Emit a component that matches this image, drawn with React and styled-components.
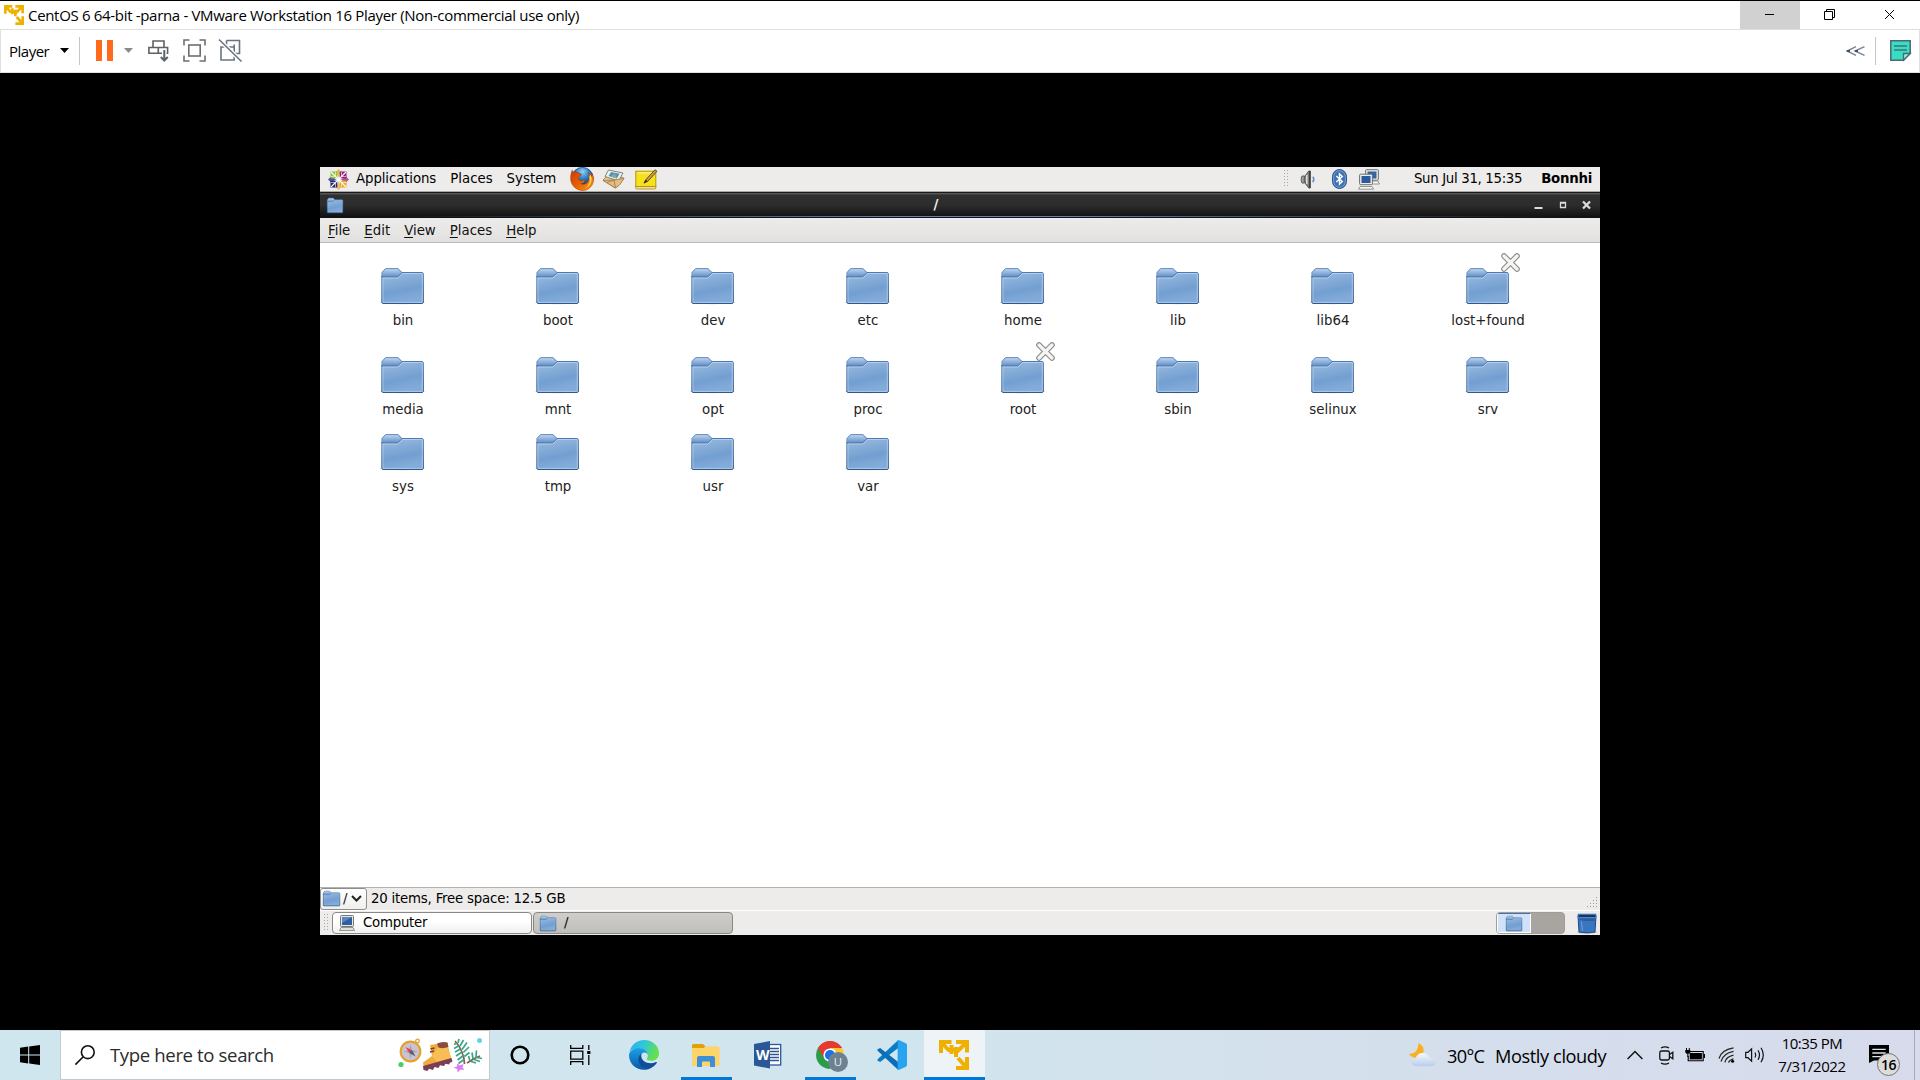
import React from "react";
import styled, { createGlobalStyle, css } from "styled-components";

const GlobalStyle = createGlobalStyle`
  * { box-sizing: border-box; }
  body { margin: 0; background: #000; overflow: hidden; }
  svg { display: block; flex: none; overflow: visible; }
`;

const WIN_FONT = `"Open Sans", "Noto Sans", sans-serif`;
const GTK_FONT = `"DejaVu Sans", sans-serif`;

/* ---------- shell ---------- */

const Screen = styled.div`
  width: 1920px;
  height: 1080px;
  display: flex;
  flex-direction: column;
  background: #000;
  font-family: ${WIN_FONT};
  color: #000;
`;

const Text = styled.span`
  display: block;
  white-space: pre;
  width: ${(p) => (p.$w ? `${p.$w}px` : "auto")};
  font-size: ${(p) => p.$size || 15}px;
  line-height: 20px;
  letter-spacing: ${(p) => p.$track || 0}px;
  margin-left: ${(p) => p.$left || 0}px;
`;

const Spacer = styled.div`
  flex: 1;
`;

/* ---------- player window ---------- */

const TitleBar = styled.header`
  height: 29px;
  flex: none;
  display: flex;
  align-items: center;
  padding-left: 4px;
  border-top: 1px solid #000;
  background: #fff;
`;

const CaptionButton = styled.div`
  width: 60px;
  height: 28px;
  display: flex;
  align-items: center;
  justify-content: center;
  padding: 0 2px 2px 0;
  background: ${(p) => (p.$hot ? "#d1d1d1" : "transparent")};
`;

const Toolbar = styled.div`
  height: 44px;
  flex: none;
  display: flex;
  align-items: center;
  padding: 0 8px 1px 8px;
  border: 1px solid #dfdfdf;
  background: #fff;
`;

const ToolIcon = styled.div`
  width: ${(p) => p.$w}px;
  margin-left: ${(p) => p.$left || 0}px;
`;

const Divider = styled.div`
  width: 1px;
  height: 28px;
  background: #c6c6c6;
  margin-left: ${(p) => p.$left}px;
`;

const Stage = styled.main`
  flex: 1;
  display: flex;
  justify-content: center;
  padding-top: 94px;
  background: #000;
`;

/* ---------- guest desktop ---------- */

const Guest = styled.section`
  width: 1280px;
  height: 768px;
  display: flex;
  flex-direction: column;
  background: #fff;
  font-family: ${GTK_FONT};
  font-size: 13.33px;
  line-height: 16px;
  color: #111;
`;

const TopPanel = styled.div`
  height: 25px;
  flex: none;
  display: flex;
  align-items: center;
  padding: 0 8px;
  background: #edeceb;
  border-bottom: 1px solid #a9a8a6;
`;

const PanelItem = styled.span`
  white-space: pre;
  margin-left: ${(p) => p.$left || 0}px;
  font-weight: ${(p) => (p.$bold ? 700 : 400)};
  letter-spacing: ${(p) => p.$track || 0}px;
  color: #000;
`;

const PanelIcon = styled.div`
  margin-left: ${(p) => p.$left || 0}px;
`;

const WindowTitle = styled.div`
  height: 26px;
  flex: none;
  display: flex;
  align-items: center;
  padding: 0 9px 1px 7px;
  border-top: 1px solid #1a1a1a;
  background:
    linear-gradient(90deg, #111 5%, #5c83b4 45%, #5c83b4 58%, #111 97%) 0 23px / 100% 1px no-repeat,
    linear-gradient(#555 0, #555 1px, #2f2f2f 2px, #2d2d2d 12px, #161616 22px, #111 100%);
  color: #fff;
`;

const TitleText = styled.span`
  flex: 1;
  text-align: center;
  font-weight: 700;
  color: #f4f4f4;
  padding-right: 4px;
`;

const MenuBar = styled.nav`
  height: 25px;
  flex: none;
  display: flex;
  align-items: center;
  padding: 2px 8px 0;
  gap: 14px;
  border-bottom: 1px solid #bdbbb8;
  background: linear-gradient(#edeceb, #e2e1df);
`;

const MenuItem = styled.span`
  white-space: pre;
  u { text-underline-offset: 2px; }
`;

const FileView = styled.div`
  height: 644px;
  flex: none;
  display: grid;
  grid-template-columns: repeat(8, 155px);
  grid-template-rows: 89px 77px 77px;
  padding: 25px 0 0 5px;
  background: #fff;
`;

const FileCell = styled.div`
  display: flex;
  flex-direction: column;
  align-items: center;
  gap: 9px;
`;

const IconBox = styled.div`
  position: relative;
  width: 42px;
  height: 36px;
  margin-right: 1px;
`;

const Emblem = styled.div`
  position: absolute;
  left: 35px;
  top: -15px;
`;

const FileName = styled.span`
  color: #222;
  white-space: pre;
  padding-left: 1px;
`;

const StatusBar = styled.div`
  height: 23px;
  flex: none;
  display: flex;
  align-items: center;
  border-top: 1px solid #b5b3b0;
  background: #edeceb;
`;

const PathButton = styled.div`
  width: 47px;
  height: 22px;
  display: flex;
  align-items: center;
  padding: 0 0 1px 2px;
  gap: 3px;
  border: 1px solid #8e8c88;
  border-radius: 3px;
  background: linear-gradient(#fff, #efefee);
`;

const StatusText = styled.span`
  margin-left: 4px;
  letter-spacing: -0.21px;
  color: #000;
`;

const GripHolder = styled.div`
  align-self: flex-end;
  padding: 0 2px 2px 0;
`;

const BottomPanel = styled.div`
  height: 25px;
  flex: none;
  display: flex;
  align-items: center;
  padding: 0 3px 0 4px;
  border-top: 1px solid #fff;
  background: #edeceb;
`;

const TaskButton = styled.div`
  width: 200px;
  height: 22px;
  display: flex;
  align-items: center;
  gap: 8px;
  padding-left: 6px;
  margin-left: ${(p) => p.$left || 0}px;
  border: 1px solid #8a8885;
  border-radius: 4px;
  color: #000;
  ${(p) =>
    p.$active
      ? css`background: linear-gradient(#d0cecb, #c0beba);`
      : css`background: linear-gradient(#fff 40%, #f0f0ef);`}
`;

const TaskLabel = styled.span`
  letter-spacing: -0.25px;
  padding-bottom: ${(p) => p.$lift || 0}px;
`;

const Pager = styled.div`
  width: 69px;
  height: 22px;
  display: flex;
  border-radius: 4px;
  overflow: hidden;
  border: 1px solid #a09e9b;
  background: #a8a4a0;
  margin-right: 12px;
`;

const PagerCell = styled.div`
  width: 34px;
  display: flex;
  align-items: center;
  justify-content: center;
  background: #d1e2f8;
  border: 1px solid #fff;
  border-top-color: #4b6ea5;
`;

/* ---------- taskbar ---------- */

const Taskbar = styled.footer`
  height: 50px;
  flex: none;
  display: flex;
  background: linear-gradient(90deg, #cfe6ef 0, #d1e5ee 48%, #d4dfec 72%, #d7dbec 100%);
`;

const Slot = styled.div`
  width: ${(p) => p.$w || 62}px;
  height: 50px;
  display: flex;
  align-items: center;
  justify-content: center;
`;

const AppSlot = styled(Slot)`
  background-repeat: no-repeat;
  ${(p) =>
    p.$open &&
    css`
      background-image: linear-gradient(#0078d7, #0078d7)
        ${p.$active ? ", linear-gradient(#edf3f7, #edf3f7)" : ""};
      background-position: ${p.$active ? "1px 47px, 1px 0" : "6px 47px"};
      background-size: ${p.$active ? "61px 3px, 61px 50px" : "51px 3px"};
    `}
`;

const SearchBox = styled.div`
  width: 430px;
  height: 50px;
  display: flex;
  align-items: center;
  padding: 0 6px 0 14px;
  border: 1px solid #c6c9cb;
  background: #fff;
  color: #2b2b2b;
`;

const TrayItem = styled.div`
  height: 50px;
  display: flex;
  align-items: center;
  margin-left: ${(p) => p.$left || 0}px;
  padding-top: ${(p) => p.$drop || 0}px;
`;

const Clock = styled.div`
  width: 80px;
  margin-left: 6px;
  padding-top: 3px;
  display: flex;
  flex-direction: column;
  align-items: center;
  gap: 3px;
`;

const Notifications = styled.div`
  position: relative;
  width: 20px;
  height: 50px;
  padding-top: 15px;
  margin-left: 17px;
`;

const Badge = styled.span`
  position: absolute;
  left: 8px;
  top: 23px;
  width: 23px;
  height: 23px;
  border-radius: 50%;
  border: 1px solid #777;
  background: #dcdcdc;
  font-size: 14px;
  font-weight: 600;
  line-height: 21px;
  letter-spacing: -0.6px;
  text-align: center;
`;

const ShowDesktop = styled.div`
  width: 6px;
  margin-left: 25px;
  border-left: 1px solid #a3adb8;
`;

/* ---------- drawings ---------- */

const VmwareMark = ({ size, color = "#f0b000" }) => (
  <svg width={size} height={size} viewBox="0 0 30 30" fill="none" stroke={color} strokeWidth="4">
    <path d="M2 13V2H12.5M2.5 2.5L10 10.5M9 10H15M12.5 5L12.5 14" />
    <path d="M17 2H28V12.5M27 3L16.5 13M17 7V17" />
    <path d="M28 17V28H17M27 27L19 18" />
  </svg>
);

const Folder = ({ w = 43, h = 36 }) => (
  <svg width={w} height={h} viewBox="0 0 43 36" preserveAspectRatio="none">
    <defs>
      <linearGradient id="fBody" x1="0" y1="0" x2="0.25" y2="1">
        <stop offset="0" stopColor="#a5c1e2" />
        <stop offset="0.7" stopColor="#729fd1" />
        <stop offset="1" stopColor="#83abd9" />
      </linearGradient>
      <linearGradient id="fTab" x1="0" y1="0" x2="0" y2="1">
        <stop offset="0" stopColor="#b9d0ec" />
        <stop offset="1" stopColor="#5f8dc4" />
      </linearGradient>
      <linearGradient id="fLine" x1="0" y1="0" x2="0" y2="1">
        <stop offset="0" stopColor="#4f80bd" />
        <stop offset="1" stopColor="#204a87" />
      </linearGradient>
    </defs>
    <ellipse cx="21.5" cy="34.6" rx="22.5" ry="1.6" fill="#000" opacity="0.18" />
    <path d="M1 9V4.5L4.5 .7H17L21 4.5H41Q42.3 4.5 42.3 6V34Q42.3 35.4 41 35.4H2Q.9 35.4 .9 34V8Z" fill="url(#fBody)" stroke="url(#fLine)" strokeWidth={w < 30 ? 2.2 : 1} />
    <path d="M1.6 9V4.8L4.8 1.3H16.8L20.3 5L16.5 9Z" fill="url(#fTab)" />
    <path d="M1.5 9H16.5L20.8 5" fill="none" stroke="#4677b3" strokeWidth={w < 30 ? 1.8 : 1} />
    <path d="M1.9 34.4V10H17L21.5 5.5H41.3V34.4Z" fill="none" stroke="#c8dcf2" strokeWidth=".9" opacity=".75" />
  </svg>
);

const LockedEmblem = () => (
  <svg width="19" height="19" viewBox="0 0 19 19">
    <path d="M3 3L16 16M16 3L3 16" stroke="#888a85" strokeWidth="5.6" strokeLinecap="round" />
    <path d="M3 3L16 16M16 3L3 16" stroke="#f4f4f3" strokeWidth="3.4" strokeLinecap="round" />
  </svg>
);

const CentosMark = () => (
  <svg width="21" height="21" viewBox="0 0 21 21">
    {[0, 90, 180, 270].map((a, i) => (
      <g key={a} transform={`rotate(${a} 10.5 10.5)`}>
        <path d="M10.5 0L13.5 3L10.5 8L7.5 3Z" fill={["#efa724", "#932279", "#e8b04a", "#262577"][i]} opacity=".75" />
        <path d="M11.7 2.5H18.5V9.3H11.7Z" fill={["#932279", "#efa724", "#262577", "#8cc63a"][i]} />
        <path d="M10.5 10.5L18 3" stroke="#fff" strokeWidth="1.1" fill="none" />
        <path d="M13.5 3V7.5H18" stroke="#fff" strokeWidth=".6" fill="none" />
      </g>
    ))}
  </svg>
);

const Firefox = () => (
  <svg width="24" height="24" viewBox="0 0 24 24">
    <defs>
      <radialGradient id="ffG" cx=".5" cy=".2" r=".7">
        <stop offset="0" stopColor="#8fd3f7" />
        <stop offset=".5" stopColor="#2c7ac3" />
        <stop offset="1" stopColor="#0b2a63" />
      </radialGradient>
      <linearGradient id="ffO" x1="0" y1="0" x2="1" y2="1">
        <stop offset="0" stopColor="#c93a09" />
        <stop offset=".5" stopColor="#e66000" />
        <stop offset=".85" stopColor="#f08a15" />
        <stop offset="1" stopColor="#b93208" />
      </linearGradient>
    </defs>
    <circle cx="12.5" cy="11" r="10.6" fill="url(#ffG)" stroke="#123a78" strokeWidth=".8" />
    <path d="M2.2 3.2C2.7 4.5 3.2 5 4.4 5.2C6 4.6 8 5 9 6.3L11.5 7.2C11 9 9.4 9.3 8.5 10.2C8 12 9 13 10 13.5C12 14.2 13.5 12.6 15 13C14.6 15.6 12.6 16.6 10.7 16.4C13 18.2 17 17 18.6 13.6C19.7 10.8 19 7.6 17.8 5.5C20 7 21 8.5 21.5 10L21.6 6C24.2 10 24.3 14.5 21.8 18.4C19 22.6 14.7 24.1 10.4 23.2C4.5 22 .6 17.2 .6 11.2C.6 8 1.4 5 2.2 3.2Z" fill="url(#ffO)" stroke="#a83208" strokeWidth=".5" />
    <path d="M21.5 10C22.4 15 19.5 20.3 14.5 21.4C19 19.5 20.4 14.6 19.3 9.8L20.6 7.8Z" fill="#ffd54a" />
  </svg>
);

const Mail = () => (
  <svg width="23" height="20" viewBox="0 0 23 20" strokeLinejoin="round">
    <path d="M1 11L7 5L22 9L17 16L13 19Z" fill="#e9c58e" stroke="#a07842" strokeWidth=".8" />
    <path d="M6.5 1L21 4L16.5 12L3 7.5Z" fill="#eef1ee" stroke="#7f8582" />
    <path d="M9 3L17.6 4.8L14.8 9.6L6.5 7Z" fill="#5b8fbd" />
    <path d="M9 7.6L12.8 4.4L14.6 9.4Z" fill="#8bb37c" />
    <path d="M1 11.5L12 11L22 9.5L17.5 16L13.5 19Z" fill="#e3bd85" stroke="#a07842" strokeWidth=".8" />
    <path d="M12 11L13.5 19M12 11L5 13.5" stroke="#a07842" strokeWidth=".8" />
  </svg>
);

const Notes = () => (
  <svg width="22" height="21" viewBox="0 0 22 21">
    <rect x=".8" y="16" width="20" height="4" rx="1" fill="#f3d9a5" stroke="#c9922e" />
    <rect x=".8" y="2.2" width="20" height="15.3" fill="#f5e11c" stroke="#b39a00" />
    <path d="M2.5 3.9H19" stroke="#fdf6a4" />
    <path d="M9 14L11 10.5L20 .8L22 2.3L12.8 12.3Z" fill="#c99a56" stroke="#5f4218" strokeWidth=".9" />
    <path d="M8.6 14.4L10.8 10.8L12.6 12.2Z" fill="#2d2415" />
  </svg>
);

const Dots = ({ rows }) => (
  <svg width="5" height={rows * 3} viewBox={`0 0 5 ${rows * 3}`} fill="#aaa8a5">
    {Array.from({ length: rows }, (_, r) => (
      <g key={r}>
        <rect x="0" y={r * 3} width="1" height="1" />
        <rect x="3" y={r * 3} width="1" height="1" />
      </g>
    ))}
  </svg>
);

const ResizeGrip = () => (
  <svg width="11" height="11" viewBox="0 0 11 11" fill="#999">
    {[[9, 0], [6, 3], [9, 3], [3, 6], [6, 6], [9, 6], [0, 9], [3, 9], [6, 9], [9, 9]].map(([x, y]) => (
      <rect key={`${x}-${y}`} x={x} y={y} width="1" height="1" />
    ))}
  </svg>
);

const GuestVolume = () => (
  <svg width="16" height="19" viewBox="0 0 16 19">
    <path d="M2 6H4.5Q3.4 9.5 4.5 13H2Q.2 9.5 2 6Z" fill="#a9aba7" stroke="#565855" />
    <path d="M5 6L8.8 1H10.3V18H8.8L5 13Q4 9.5 5 6Z" fill="#8d8f8b" stroke="#565855" />
    <path d="M6.8 5V14" stroke="#f0f0ee" strokeWidth="1.2" />
    <path d="M9.6 1V18" stroke="#3f403e" strokeWidth="1.6" />
    <path d="M12.8 6.8Q15 9.5 12.8 12.2" fill="none" stroke="#6b93c9" strokeWidth="1.5" />
  </svg>
);

const GuestBluetooth = () => (
  <svg width="15" height="20" viewBox="0 0 15 20">
    <rect x=".6" y=".6" width="13.8" height="18.8" rx="6.9" fill="#3e72b3" stroke="#1f4a86" />
    <rect x="1.7" y="1.7" width="11.6" height="16.6" rx="5.8" fill="none" stroke="#88afdd" strokeWidth=".8" />
    <path d="M4.3 7L10.3 12.6L7.5 15.2V4.8L10.3 7.4L4.3 13" fill="none" stroke="#fff" strokeWidth="1.4" />
  </svg>
);

const GuestNetwork = () => (
  <svg width="22" height="21" viewBox="0 0 22 21">
    <rect x="7.6" y=".7" width="12.8" height="10.5" rx="1" fill="#eceded" stroke="#6e706c" />
    <rect x="9.5" y="2.5" width="9" height="7" fill="#3263a4" />
    <path d="M14 12H20L21.4 15H14Z" fill="#f6f6f5" stroke="#888a85" strokeWidth=".9" />
    <rect x="1.6" y="5.2" width="12.8" height="10.5" rx="1" fill="#eceded" stroke="#6e706c" />
    <rect x="3.5" y="7" width="9" height="7" fill="#2c5a9c" />
    <path d="M2 17.5H14L15.6 20.2H.5Z" fill="#f6f6f5" stroke="#888a85" strokeWidth=".9" />
  </svg>
);

const GuestWindowButtons = () => (
  <svg width="58" height="10" viewBox="0 0 58 10">
    <rect x="1.5" y="7" width="8" height="2" fill="#dcdcdc" />
    <path d="M27.5 2.5H32.5V7.5H27.5ZM27 3H33" fill="none" stroke="#dcdcdc" strokeWidth="1.3" />
    <path d="M50 1.5L57 8.5M57 1.5L50 8.5" stroke="#dcdcdc" strokeWidth="2.3" />
  </svg>
);

const ComputerIcon = () => (
  <svg width="16" height="16" viewBox="0 0 16 16">
    <rect x="1.5" y=".5" width="13" height="11" rx="1" fill="#e8e8e6" stroke="#757773" />
    <rect x="3" y="2" width="10" height="8" fill="#2f5ea1" />
    <path d="M3 2H13L3 8Z" fill="#5b86c0" />
    <path d="M2 12.5H14L15.6 15.5H.4Z" fill="#dededc" stroke="#8b8d89" strokeWidth=".9" />
  </svg>
);

const Trash = () => (
  <svg width="20" height="21" viewBox="0 0 20 21">
    <ellipse cx="10" cy="19.3" rx="10" ry="1.5" opacity=".25" />
    <path d="M1 3L2 19Q10 20.6 18 19L19 3Z" fill="#3a76bf" stroke="#1c4a88" />
    <path d="M1 1.2H19V4.5H1Z" fill="#16355f" stroke="#4c84c6" />
    <path d="M1.5 5.5H18.5L17 8H8L3 7Z" fill="#2a5da0" />
    <path d="M4.5 8.5L5.4 18" stroke="#6da2de" />
  </svg>
);

const WindowsLogo = () => (
  <svg width="20" height="20" viewBox="0 0 20 20">
    <path d="M0 2.8L8.2 1.6V9.5H0ZM9.2 1.5L20 0V9.5H9.2ZM0 10.5H8.2V18.4L0 17.2ZM9.2 10.5H20V20L9.2 18.5Z" />
  </svg>
);

const SearchIcon = () => (
  <svg width="20" height="20" viewBox="0 0 20 20" fill="none" stroke="#111" strokeWidth="1.6">
    <circle cx="12.8" cy="7.2" r="6.4" />
    <path d="M8.2 11.8L.4 19.6" />
  </svg>
);

const SearchArt = () => (
  <svg width="85" height="35" viewBox="0 0 85 35">
    <circle cx="19.5" cy="3" r="1.8" fill="none" stroke="#e0a032" strokeWidth="1.3" />
    <circle cx="12.5" cy="13.5" r="9.8" fill="#c9c4d4" stroke="#e3a22f" strokeWidth="2.2" />
    <path d="M12.5 6L14 12L20 13.5L14 15L12.5 21L11 15L5 13.5L11 12Z" fill="#aaa5b6" />
    <path d="M7.5 9L14 12.3L11.2 14.8Z" fill="#ea3a4c" />
    <path d="M17.5 18.5L14 12.3L11.2 14.8Z" fill="#5b5568" />
    <circle cx="3" cy="26.5" r="2.6" fill="#46d068" />
    <path d="M32 7L49 4.5L53.5 22L26 31L25 24.5L34 18Z" fill="#f0ab3c" />
    <path d="M34 18L39 24L53 20L49.5 8L40 9Z" fill="#f8be55" />
    <path d="M39 5.5Q44 3 49.5 4.5L50.5 9Q45 11 40.5 9.5Z" fill="#8c4a41" />
    <path d="M25 28L53.5 20L54.5 23.5L52 24.7L51 26.5L47.5 25.8L46 28L42 27.2L40.5 30L36.5 29L35 32L31 30.8L29.5 33L25.5 32Z" fill="#7b3f55" />
    <path d="M32.5 11L36.5 10M32 14L36 13" stroke="#7b3f35" strokeWidth="1.4" />
    <path d="M57 3Q66 13 66.5 26M69 25Q76 20 82 18" fill="none" stroke="#8b5a44" strokeWidth="1.7" />
    <path d="M59 5L56 6.5M60.5 8L56 10.5M62.5 11L57 14M64 14L58 18M65.5 17.5L59.5 22M60 5L61 1M62 8L65.5 2M64 11.5L69 4.5M65.3 14.5L71 9M66.3 18.5L71.5 14.5M72 23L70.5 18M75 21L74 14.5M78 19.5L78.5 12.5M73 23.5L78 25M76 21.5L82 23.5M79 19.5L84 20.5M66 21.5L60.5 25.5" stroke="#3aa586" strokeWidth="1.7" />
    <circle cx="81.5" cy="2.6" r="2.5" fill="#5fd6e8" />
    <path d="M59 25.5L62 27.5L65.5 26L64.5 29.5L66.5 32L62.5 31.5L59.5 34.5L59.3 31L55.5 29.7L59 28.5Z" fill="#dd79f5" />
  </svg>
);

const TaskView = () => (
  <svg width="21" height="20" viewBox="0 0 21 20" fill="none" stroke="#000" strokeWidth="1.3">
    <path d="M.7 0V3.3H12.8V0M.7 20V16.7H12.8V20M.7 6.2H12.8V14.2H.7ZM18.8 0V5M18.8 10V20" />
    <path d="M17.2 7.5H20.4" strokeWidth="3" />
  </svg>
);

const Edge = () => (
  <svg width="30" height="30" viewBox="0 0 30 30">
    <defs>
      <linearGradient id="eA" x1="0" y1="0" x2="1" y2="0.4">
        <stop offset="0" stopColor="#2cadf0" />
        <stop offset=".5" stopColor="#2fc8d8" />
        <stop offset="1" stopColor="#66e04c" />
      </linearGradient>
      <linearGradient id="eB" x1="0" y1="0" x2="0" y2="1">
        <stop offset="0" stopColor="#1ba1ea" />
        <stop offset="1" stopColor="#0c59a4" />
      </linearGradient>
    </defs>
    <path d="M.4 13C1.5 5 8 0 15 0C24 0 30 6.5 30 13.2C30 18 26.5 20.8 22.3 20.8C19 20.8 17.5 19.7 17.7 18.8C18.2 18 18.8 17 18.8 15.4C18.8 12 15.5 8.3 9.8 8.3C5 8.3 1.5 10.5 .4 13Z" fill="url(#eA)" />
    <path d="M.2 13.5C2 9.8 5.6 7.9 10 7.9C15.3 7.9 18.8 11.6 18.8 15C18 12.6 15.8 12.2 14.2 12.8C11.5 14 10.2 17 10.5 20.5C11 25.5 15 29 19 29.2C10 32 .6 25.5 0 16Z" fill="url(#eB)" />
    <path d="M12.7 13.4C9 15.5 8.2 20.5 11 24.8C13.8 28.8 17.2 29.6 19.4 29.2C23.2 28 26.2 25.7 27.9 22.8C28.2 22 27.6 21.8 27 22C20.5 25 13.2 22 12.4 17C12.2 15.5 12.2 14.4 12.7 13.4Z" fill="#0f4e9b" />
  </svg>
);

const Explorer = () => (
  <svg width="28" height="23" viewBox="0 0 28 23">
    <path d="M0 4V1.5Q0 0 1.5 0H11L13.5 2.5L11 5H0Z" fill="#e29f0a" />
    <path d="M0 4H12L14 2.5H26Q27.6 2.5 27.6 4V22H0Z" fill="#fdd46a" />
    <path d="M5 23V14Q5 12 7 12H21Q23 12 23 14V23H18V18.5Q18 17.5 17 17.5H11Q10 17.5 10 18.5V23Z" fill="#3f8fd6" />
  </svg>
);

const WordGlyph = styled.div`
  width: 28px;
  height: 28px;
  display: grid;
  & > * { grid-area: 1 / 1; }
  span {
    font: 700 14px/28px ${WIN_FONT};
    color: #fff;
    padding-left: 2px;
    z-index: 1;
  }
`;

const Word = () => (
  <WordGlyph>
    <svg width="28" height="28" viewBox="0 0 28 28">
      <rect x="14" y="3.5" width="12.7" height="20.5" fill="#fff" stroke="#2b5797" strokeWidth="1.3" />
      <path d="M16 7.5H25M16 10.5H25M16 13.5H25M16 16.5H25M16 19.5H25" stroke="#2b5797" strokeWidth="1.5" />
      <path d="M0 3L16 0V27.5L0 24.5Z" fill="#2b5797" />
    </svg>
    <span>W</span>
  </WordGlyph>
);

const ChromeWrap = styled.div`
  position: relative;
  width: 28px;
  height: 28px;
`;

const ProfileBadge = styled.span`
  position: absolute;
  left: 12px;
  top: 11px;
  width: 20px;
  height: 20px;
  border-radius: 50%;
  background: #6d8290;
  color: #e8eef1;
  font: 400 11.5px/20px ${WIN_FONT};
  text-align: center;
`;

const Chrome = () => (
  <ChromeWrap>
    <svg width="28" height="28" viewBox="0 0 28 28">
      <path d="M14 14L1.9 7A14 14 0 0 1 26.1 7Z" fill="#e33b2e" />
      <path d="M14 14L26.1 7A14 14 0 0 1 14 28Z" fill="#fcc934" />
      <path d="M14 14L14 28A14 14 0 0 1 1.9 7Z" fill="#2a9c4a" />
      <path d="M14 7H26.1L14 14Z" fill="#fcc934" />
      <path d="M14 7H26.1A14 14 0 0 0 1.9 7L8 17Z" fill="#e33b2e" />
      <circle cx="14" cy="14" r="6.6" fill="#fff" />
      <circle cx="14" cy="14" r="5.1" fill="#1a73e8" />
    </svg>
    <ProfileBadge>U</ProfileBadge>
  </ChromeWrap>
);

const VsCode = () => (
  <svg width="30" height="30" viewBox="0 0 30 30">
    <path d="M21.5 7.8L3.2 22L.6 20.8Q0 20 .6 19.2L21 .2Z" fill="#0b7cc4" />
    <path d="M21.5 22.2L3.2 8L.6 9.2Q0 10 .6 10.8L21 29.8Z" fill="#0a6db5" />
    <path d="M21.8 0L28.8 3.2Q30 3.9 30 5V25Q30 26.1 28.8 26.8L21.8 30Q20.6 30 20.6 28.8V1.2Q20.6 0 21.8 0Z" fill="#27a3ef" />
  </svg>
);

const Weather = () => (
  <svg width="27" height="24" viewBox="0 0 27 24">
    <defs>
      <linearGradient id="wC" x1="0" y1="0" x2="0" y2="1">
        <stop offset="0" stopColor="#f4f8fd" />
        <stop offset="1" stopColor="#b7cdec" />
      </linearGradient>
    </defs>
    <path d="M9.5 0Q15.5 3 14.5 9Q12 16 5 14.5Q1.5 13.8 0 11Q9 11.5 9.5 0Z" fill="#fbb022" />
    <path d="M7 23.2Q2.3 23 2.3 19Q2.8 15.5 6.5 15.5Q8.5 9.5 14.5 10Q19.5 10.8 20.2 15.2Q26.5 15 26.8 19.3Q26.5 23.2 22.5 23.3Z" fill="url(#wC)" />
  </svg>
);

const Chevron = () => (
  <svg width="16" height="10" viewBox="0 0 16 10" fill="none" stroke="#111" strokeWidth="1.5">
    <path d="M.6 9L8 1.5L15.4 9" />
  </svg>
);

const MeetNow = () => (
  <svg width="15" height="19" viewBox="0 0 15 19" fill="none" stroke="#111" strokeWidth="1.3">
    <rect x=".8" y="5" width="9.6" height="9" rx="1.8" />
    <path d="M10.5 8.5L13.8 6.3V12.7L10.5 10.5M2 2Q6 -.2 10 2M2 17Q6 19.2 10 17" />
  </svg>
);

const Battery = () => (
  <svg width="20" height="14" viewBox="0 0 20 14">
    <path d="M5 3.5H18.2V12.7H3.2V8" fill="none" stroke="#000" strokeWidth="1.1" />
    <rect x="4.7" y="5" width="12.2" height="6.4" />
    <rect x="18.6" y="6" width="1.4" height="4" />
    <path d="M.3 2H5.4V4.6Q4.6 6 2.8 6T.3 4.6ZM1 0H2V2H1ZM3.8 0H4.8V2H3.8ZM2.3 5.5H3.4V9H2.3Z" />
  </svg>
);

const Wifi = () => (
  <svg width="17" height="16" viewBox="0 0 17 16" fill="none" stroke="#222" strokeWidth="1.2">
    <path d="M1 11.5Q3 3 15.5 .8M3 14.5Q5 6.5 15.5 4.4M6.8 15.3Q8 10 15.5 8.2M10.5 15.5Q11.5 13 15.5 11.8" />
    <circle cx="14.6" cy="14.3" r="1.5" fill="#000" stroke="none" />
  </svg>
);

const Volume = () => (
  <svg width="21" height="16" viewBox="0 0 21 16" fill="none" stroke="#111" strokeWidth="1.2">
    <path d="M.7 5.3H3L6.6 1.8V14.2L3 10.7H.7ZM10 5.5Q11.5 8 10 10.5M13 3.2Q16 8 13 12.8M16 .8Q20.6 8 16 15.2" />
  </svg>
);

const NotificationIcon = () => (
  <svg width="20" height="19" viewBox="0 0 20 19">
    <path d="M0 0H20V15.5H5L0 18Z" />
    <path d="M3.3 4.3H16.7M3.3 8H16.7M3.3 11.7H12" stroke="#dbe0ea" strokeWidth="1.3" />
  </svg>
);

const SendKeys = () => (
  <svg width="22" height="22" viewBox="0 0 22 22" fill="none" stroke="#5d6266" strokeWidth="1.6">
    <path d="M5 1H16V7.5H5ZM.9 7.5H19.6V13.3H.9ZM10.3 7.5V13.3" />
    <path d="M16.3 11.5V20" stroke="#fff" strokeWidth="4.5" />
    <path d="M16.3 10V20M12.8 17L16.3 20.5L19.8 17" strokeWidth="2" />
  </svg>
);

const FullScreen = () => (
  <svg width="23" height="23" viewBox="0 0 23 23" fill="none" stroke="#6b6f73" strokeWidth="1.6">
    <path d="M1 6.5V1H6.5M16.5 1H22V6.5M22 16.5V22H16.5M6.5 22H1V16.5" />
    <rect x="5.8" y="6" width="11.4" height="11" />
  </svg>
);

const Unity = () => (
  <svg width="23" height="23" viewBox="0 0 23 23" fill="none" stroke="#6a7480" strokeWidth="1.6">
    <path d="M7.5 1.5H20.5V14.5H15.5M7.5 1.5V7.5M2 8H15.2V21H2ZM15.2 8V5.5M15.2 14.5H12" />
    <path d="M0 .5L22.5 22.5" stroke="#fff" strokeWidth="4" />
    <path d="M0 .5L22.5 22.5" />
  </svg>
);

const StickyNote = () => (
  <svg width="21" height="21" viewBox="0 0 21 21">
    <path d="M.8 .8H20.2V13.5L13.5 20.2H.8Z" fill="#36dfc4" stroke="#4d6670" strokeWidth="1.5" />
    <path d="M4 6H17M4 10H17" stroke="#42727a" strokeWidth="1.5" />
    <path d="M20.2 13.5H13.5V20.2Z" fill="#8eeedd" stroke="#4d6670" strokeWidth="1.3" />
  </svg>
);

const Caret = ({ w = 9, color = "#000" }) => (
  <svg width={w} height="5" viewBox="0 0 9 5"><path d="M0 0H9L4.5 5Z" fill={color} /></svg>
);

/* ---------- content ---------- */

const FOLDERS = [
  "bin", "boot", "dev", "etc", "home", "lib", "lib64", "lost+found",
  "media", "mnt", "opt", "proc", "root", "sbin", "selinux", "srv",
  "sys", "tmp", "usr", "var",
];
const LOCKED = new Set(["lost+found", "root"]);
const MENUS = ["File", "Edit", "View", "Places", "Help"];

const PlayerChrome = () => (
  <>
    <TitleBar>
      <VmwareMark size={20} />
      <Text $size={15} $track={-0.32} $left={4}>
        CentOS 6 64-bit -parna - VMware Workstation 16 Player (Non-commercial use only)
      </Text>
      <Spacer />
      <CaptionButton $hot>
        <svg width="9" height="11"><rect x="0" y="5" width="9" height="1" /></svg>
      </CaptionButton>
      <CaptionButton>
        <svg width="11" height="11" fill="none" stroke="#000">
          <path d="M.5 2.5H8.5V10.5H.5ZM2.5 2.5V.5H10.5V8.5H8.5" />
        </svg>
      </CaptionButton>
      <CaptionButton>
        <svg width="9" height="9" stroke="#000"><path d="M0 0L9 9M9 0L0 9" /></svg>
      </CaptionButton>
    </TitleBar>
    <Toolbar>
      <Text $size={15} $track={-0.5} $w={42}>Player</Text>
      <ToolIcon $w={9} $left={9}><Caret /></ToolIcon>
      <Divider $left={10} />
      <ToolIcon $w={17} $left={16}>
        <svg width="17" height="21" fill="#ff6a1c"><rect width="6" height="21" /><rect x="11" width="6" height="21" /></svg>
      </ToolIcon>
      <ToolIcon $w={9} $left={11}><Caret color="#8a8a8a" /></ToolIcon>
      <ToolIcon $w={22} $left={15}><SendKeys /></ToolIcon>
      <ToolIcon $w={23} $left={13}><FullScreen /></ToolIcon>
      <ToolIcon $w={23} $left={13}><Unity /></ToolIcon>
      <Spacer />
      <ToolIcon $w={19}>
        <svg width="19" height="10" viewBox="0 0 19 10" fill="none" stroke="#7b858e" strokeWidth="1.4">
          <path d="M10 .7L1 5L10 9.3M18.5 .7L9 5L18.5 9.3" />
          <path d="M1 5H4M9 5H12" stroke="#44515c" strokeWidth="2" />
        </svg>
      </ToolIcon>
      <Divider $left={10} />
      <ToolIcon $w={21} $left={14}><StickyNote /></ToolIcon>
    </Toolbar>
  </>
);

const GuestDesktop = () => (
  <Guest>
    <TopPanel>
      <CentosMark />
      <PanelItem $left={7} $track={-0.1}>Applications</PanelItem>
      <PanelItem $left={14}>Places</PanelItem>
      <PanelItem $left={14}>System</PanelItem>
      <PanelIcon $left={14}><Firefox /></PanelIcon>
      <PanelIcon $left={8}><Mail /></PanelIcon>
      <PanelIcon $left={10}><Notes /></PanelIcon>
      <Spacer />
      <Dots rows={6} />
      <PanelIcon $left={11}><GuestVolume /></PanelIcon>
      <PanelIcon $left={16}><GuestBluetooth /></PanelIcon>
      <PanelIcon $left={11}><GuestNetwork /></PanelIcon>
      <PanelItem $left={34} $track={-0.33}>Sun Jul 31, 15:35</PanelItem>
      <PanelItem $left={19} $track={-0.25} $bold>Bonnhi</PanelItem>
    </TopPanel>
    <WindowTitle>
      <Folder w={16} h={15} />
      <TitleText>/</TitleText>
      <GuestWindowButtons />
    </WindowTitle>
    <MenuBar>
      {MENUS.map((m) => (
        <MenuItem key={m}><u>{m[0]}</u>{m.slice(1)}</MenuItem>
      ))}
    </MenuBar>
    <FileView>
      {FOLDERS.map((name) => (
        <FileCell key={name}>
          <IconBox>
            <Folder />
            {LOCKED.has(name) && <Emblem><LockedEmblem /></Emblem>}
          </IconBox>
          <FileName>{name}</FileName>
        </FileCell>
      ))}
    </FileView>
    <StatusBar>
      <PathButton>
        <Folder w={17} h={15} />
        <span>/</span>
        <svg width="11" height="7" fill="none" stroke="#222" strokeWidth="2"><path d="M1 1L5.5 5.5L10 1" /></svg>
      </PathButton>
      <StatusText>20 items, Free space: 12.5 GB</StatusText>
      <Spacer />
      <GripHolder><ResizeGrip /></GripHolder>
    </StatusBar>
    <BottomPanel>
      <Dots rows={6} />
      <TaskButton $left={3}>
        <ComputerIcon />
        <TaskLabel $lift={1}>Computer</TaskLabel>
      </TaskButton>
      <TaskButton $left={1} $active>
        <Folder w={16} h={15} />
        <TaskLabel>/</TaskLabel>
      </TaskButton>
      <Spacer />
      <Pager>
        <PagerCell><Folder w={16} h={15} /></PagerCell>
      </Pager>
      <Trash />
    </BottomPanel>
  </Guest>
);

const WindowsTaskbar = () => (
  <Taskbar>
    <Slot $w={60}><WindowsLogo /></Slot>
    <SearchBox>
      <SearchIcon />
      <Text $size={18.6} $track={-0.38} $left={15}>Type here to search</Text>
      <Spacer />
      <SearchArt />
    </SearchBox>
    <Slot $w={60}>
      <svg width="20" height="20" fill="none" stroke="#000" strokeWidth="2.6"><circle cx="10" cy="10" r="8.3" /></svg>
    </Slot>
    <Slot $w={61}><TaskView /></Slot>
    <Slot $w={2} />
    <AppSlot><Edge /></AppSlot>
    <AppSlot $open><Explorer /></AppSlot>
    <AppSlot><Word /></AppSlot>
    <AppSlot $open><Chrome /></AppSlot>
    <AppSlot><VsCode /></AppSlot>
    <AppSlot $open $active><VmwareMark size={30} /></AppSlot>
    <Spacer />
    <TrayItem><Weather /></TrayItem>
    <TrayItem $left={11} $drop={2}><Text $size={18.2} $track={-0.7} $w={48}>30°C</Text></TrayItem>
    <TrayItem $drop={2}><Text $size={18.2} $track={-0.4} $w={111}>Mostly cloudy</Text></TrayItem>
    <TrayItem $left={21}><Chevron /></TrayItem>
    <TrayItem $left={16}><MeetNow /></TrayItem>
    <TrayItem $left={11}><Battery /></TrayItem>
    <TrayItem $left={13}><Wifi /></TrayItem>
    <TrayItem $left={10}><Volume /></TrayItem>
    <Clock>
      <Text $size={15} $track={-0.5}>10:35 PM</Text>
      <Text $size={15} $track={-0.4}>7/31/2022</Text>
    </Clock>
    <Notifications>
      <NotificationIcon />
      <Badge>16</Badge>
    </Notifications>
    <ShowDesktop />
  </Taskbar>
);

export default function App() {
  return (
    <Screen>
      <GlobalStyle />
      <PlayerChrome />
      <Stage><GuestDesktop /></Stage>
      <WindowsTaskbar />
    </Screen>
  );
}
